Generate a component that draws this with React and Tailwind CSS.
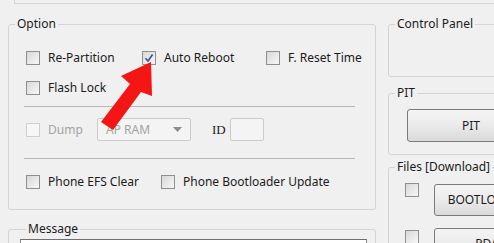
import React from 'react';

// --- small win-style pieces ---
const Check = ({ checked = false, disabled = false }) => (
    <span
        className={`relative flex h-[14px] w-[14px] shrink-0 items-center justify-center border ${
            disabled
                ? 'border-[#cfcfcf] bg-[#f6f6f6]'
                : 'border-[#8f8f8f] bg-gradient-to-br from-[#d8d8d8] to-[#f7f7f7]'
        }`}
    >
        {checked && (
            <svg width="10" height="10" viewBox="0 0 10 10">
                <path d="M1.5 5.2 L4 8 L8.6 1.5" fill="none" stroke="#3b4f8f" strokeWidth="1.6" />
            </svg>
        )}
    </span>
);

const Item = ({ label, checked, disabled, width }) => (
    <div className={`flex items-center gap-[8px] ${width}`}>
        <Check checked={checked} disabled={disabled} />
        <span className={disabled ? 'text-[#a3a3a3]' : 'text-[#1b1b1b]'}>{label}</span>
    </div>
);

const Group = ({ title, className = '', children }) => (
    <fieldset className={`rounded-[3px] border border-[#d4d4d4] ${className}`}>
        <legend className="ml-[6px] px-[2px] leading-[16px] text-[#1b1b1b]">{title}</legend>
        {children}
    </fieldset>
);

const WinButton = ({ label, className = '' }) => (
    <div
        className={`flex items-center justify-center rounded-[3px] border border-[#7a7a7a] bg-gradient-to-b from-[#f4f4f4] via-[#ebebeb] to-[#d9d9d9] text-[#1b1b1b] ${className}`}
    >
        {label}
    </div>
);

export default function App() {
    return (
        <div className="relative h-[243px] w-[494px] overflow-hidden bg-[#f0f0f0] text-[12px] font-['Noto_Sans',sans-serif]">
            {/* bord du panneau du haut */}
            <div className="ml-[14px] h-[4px] border-b border-l border-[#d6d6d6]" />

            <div className="mt-[12px] flex pl-[8px]">
                {/* -- colonne gauche -- */}
                <div className="w-[368px] shrink-0">
                    <Group title="Option" className="pb-[19px]">
                        <div className="pl-[17px]">
                            <div className="mt-[18px] flex h-[16px] items-center">
                                <Item label="Re-Partition" width="w-[116px]" />
                                <Item label="Auto Reboot" checked width="w-[124px]" />
                                <Item label="F. Reset Time" />
                            </div>
                            <div className="mt-[14px] flex h-[16px] items-center">
                                <Item label="Flash Lock" />
                            </div>
                        </div>

                        <div className="ml-[15px] mt-[10px] h-px w-[331px] bg-[#b9b9b9]" />

                        <div className="mt-[11px] flex h-[23px] items-center pl-[17px]">
                            <Item label="Dump" disabled width="w-[71px]" />
                            <div className="flex h-[23px] w-[94px] items-center justify-between rounded-[2px] border border-[#cbcbcb] bg-[#f4f4f4] pl-[8px] pr-[8px] text-[#a3a3a3]">
                                <span>AP RAM</span>
                                <svg width="9" height="5" viewBox="0 0 9 5">
                                    <path d="M0 0 H9 L4.5 5 Z" fill="#8c8c8c" />
                                </svg>
                            </div>
                            <span className="ml-[21px] w-[12px] font-['Liberation_Serif',serif] text-[13px] text-[#1b1b1b]">ID</span>
                            <div className="ml-[6px] h-[23px] w-[34px] rounded-[2px] border border-[#cbcbcb] bg-[#f4f4f4]" />
                        </div>

                        <div className="ml-[15px] mt-[17px] h-px w-[331px] bg-[#b9b9b9]" />

                        <div className="mt-[15px] flex h-[16px] items-center pl-[17px]">
                            <Item label="Phone EFS Clear" width="w-[135px]" />
                            <Item label="Phone Bootloader Update" />
                        </div>
                    </Group>

                    <Group title="Message" className="mt-[11px] h-[40px] pl-[11px] pr-[8px]">
                        <div className="mt-[2px] h-[20px] border border-[#8a8a8a] border-t-[#6f6f6f] bg-white" />
                    </Group>
                </div>

                {/* -- colonne droite -- */}
                <div className="ml-[12px] w-[160px] shrink-0">
                    <Group title="Control Panel" className="h-[61px]" />

                    <Group title="PIT" className="mt-[8px] pb-[12px]">
                        <WinButton label="PIT" className="ml-[18px] mt-[8px] h-[33px] w-[128px]" />
                    </Group>

                    <Group title="Files [Download]" className="mt-[4px] pb-[10px]">
                        <div className="mt-[9px] flex items-start pl-[16px]">
                            <div className="mt-[-1px]">
                                <Check />
                            </div>
                            <WinButton label="BOOTLOADER" className="ml-[15px] h-[32px] w-[106px]" />
                        </div>
                        <div className="mt-[12px] flex items-start pl-[16px]">
                            <div className="mt-[2px]">
                                <Check />
                            </div>
                            <WinButton label="PDA" className="ml-[15px] h-[32px] w-[106px]" />
                        </div>
                    </Group>
                </div>
            </div>

            {/* flèche rouge posée par-dessus */}
            <svg className="pointer-events-none absolute left-0 top-0" width="494" height="243">
                <polygon
                    points="151,62 121,76 130,84 101,122 113,130 141,92 152,96"
                    fill="#f41515"
                />
            </svg>
        </div>
    );
}
